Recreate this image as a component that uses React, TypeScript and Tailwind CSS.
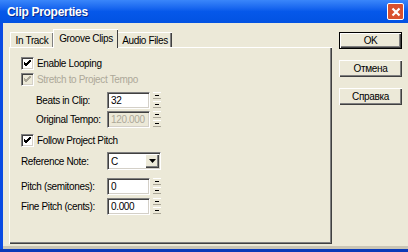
import { FC, ReactNode } from 'react';

const font = { fontFamily: '"Liberation Sans", Arial, sans-serif' };

const Spinner: FC = () => (
    <svg width="8" height="17" viewBox="0 0 8 17" className="ml-[3px] shrink-0">
        <rect x="0" y="0" width="8" height="1" fill="#FFFFFF" />
        <rect x="2" y="3" width="4" height="1" fill="#000000" />
        <rect x="0" y="6" width="8" height="1" fill="#ACA899" />
        <rect x="0" y="9" width="8" height="1" fill="#FFFFFF" />
        <rect x="2" y="12" width="4" height="1" fill="#000000" />
        <rect x="0" y="15" width="8" height="1" fill="#ACA899" />
    </svg>
);

const Check: FC<{ disabled?: boolean }> = ({ disabled }) => (
    <div
        className={`flex h-[13px] w-[13px] shrink-0 items-center justify-center border border-t-[#808080] border-l-[#808080] border-r-white border-b-white shadow-[inset_1px_1px_0_#404040,inset_-1px_-1px_0_#D4D0C8] ${
            disabled ? 'bg-[#ECE9D8]' : 'bg-white'
        }`}
    >
        <svg width="7" height="7" viewBox="0 0 7 7">
            <path d="M0 2 L2 4 L7 -1 M0 3 L2 5 L7 0 M0 4 L2 6 L7 1" stroke={disabled ? '#ACA899' : '#000'} strokeWidth="1" fill="none" />
        </svg>
    </div>
);

const CheckRow: FC<{ label: string; disabled?: boolean; className?: string }> = ({ label, disabled, className }) => (
    <div className={`flex h-[16px] items-center ${className ?? ''}`}>
        <Check disabled={disabled} />
        <span className={`ml-[3px] whitespace-nowrap ${disabled ? 'text-[#ACA899]' : 'text-black'}`}>{label}</span>
    </div>
);

const Field: FC<{ value: string; disabled?: boolean }> = ({ value, disabled }) => (
    <div
        className={`flex h-[17px] w-[43px] shrink-0 items-center overflow-hidden border border-t-[#808080] border-l-[#808080] border-r-white border-b-white pl-[3px] shadow-[inset_1px_1px_0_#404040,inset_-1px_-1px_0_#D4D0C8] ${
            disabled ? 'bg-[#ECE9D8] text-[#ACA899]' : 'bg-white text-black'
        }`}
    >
        {value}
    </div>
);

const Row: FC<{ label: string; indent?: boolean; className?: string; children: ReactNode }> = ({ label, indent, className, children }) => (
    <div className={`flex items-center ${className ?? ''}`}>
        <span className={`w-[86px] shrink-0 whitespace-nowrap ${indent ? 'pl-[15px]' : ''}`}>{label}</span>
        {children}
    </div>
);

const Button: FC<{ label: string; def?: boolean }> = ({ label, def }) => (
    <div
        className={`flex h-[17px] w-[63px] items-center justify-center bg-[#ECE9D8] shadow-[inset_1px_1px_0_white,inset_-1px_-1px_0_#404040,inset_-2px_-2px_0_#808080] ${
            def ? 'border border-black' : ''
        }`}
    >
        {label}
    </div>
);

const App: FC = () => {
    return (
        <div className="flex h-[252px] w-[408px] flex-col overflow-hidden bg-[#ECE9D8] text-[10px] tracking-[-0.35px] text-black" style={font}>
            <div className="flex h-[23px] shrink-0 items-center justify-between bg-gradient-to-b from-[#3A86FA] via-[#0658EA] to-[#0252E2] pl-[7px] pr-[4px]">
                <span className="text-[12px] font-bold tracking-[-0.3px] text-white [text-shadow:1px_1px_0_#0A2A8A]">Clip Properties</span>
                <div className="flex h-[17px] w-[17px] items-center justify-center rounded-[2px] border border-white bg-[#D9502E]">
                    <svg width="10" height="10" viewBox="0 0 10 10">
                        <path d="M1.5 1.5 L8.5 8.5 M8.5 1.5 L1.5 8.5" stroke="white" strokeWidth="2.2" />
                    </svg>
                </div>
            </div>

            <div className="flex flex-1 border-l-[3px] border-[#0A4BE3]">
                <div className="flex flex-1 flex-col">
                    <div className="flex flex-1 pl-[6px] pt-[6px]">
                        <div className="flex w-[323px] flex-col">
                            <div className="flex h-[18px] items-end">
                                <div className="ml-[1px] flex h-[15px] w-[43px] items-center justify-center border-l border-t border-white shadow-[inset_-1px_0_0_#808080]">
                                    In Track
                                </div>
                                <div className="relative z-10 -mb-[1px] flex h-[19px] w-[65px] items-center justify-center border-l border-t border-white bg-[#ECE9D8] pb-[1px] shadow-[inset_-1px_0_0_#404040]">
                                    Groove Clips
                                </div>
                                <div className="flex h-[15px] w-[54px] items-center justify-center border-t border-white shadow-[inset_-1px_0_0_#404040,inset_-2px_0_0_#808080]">
                                    Audio Files
                                </div>
                            </div>
                            <div className="flex h-[197px] flex-col border-l border-t border-white pl-[11px] pt-[7px] shadow-[inset_-1px_-1px_0_#404040,inset_-2px_-2px_0_#808080]">
                                <CheckRow label="Enable Looping" />
                                <CheckRow label="Stretch to Project Tempo" disabled />
                                <Row label="Beats in Clip:" indent className="mt-[5px]">
                                    <Field value="32" />
                                    <Spinner />
                                </Row>
                                <Row label="Original Tempo:" indent className="mt-[2px]">
                                    <Field value="120.000" disabled />
                                    <Spinner />
                                </Row>
                                <CheckRow label="Follow Project Pitch" className="mt-[4px]" />
                                <Row label="Reference Note:" className="mt-[4px]">
                                    <div className="flex h-[18px] w-[54px] items-center border border-t-[#808080] border-l-[#808080] border-r-white border-b-white bg-white shadow-[inset_1px_1px_0_#404040,inset_-1px_-1px_0_#D4D0C8]">
                                        <span className="flex-1 pl-[3px]">C</span>
                                        <div className="mr-[1px] flex h-[14px] w-[14px] items-center justify-center bg-[#ECE9D8] shadow-[inset_1px_1px_0_white,inset_-1px_-1px_0_#404040,inset_-2px_-2px_0_#808080]">
                                            <svg width="7" height="4" viewBox="0 0 7 4">
                                                <path d="M0 0 H7 L3.5 4 Z" fill="#000" />
                                            </svg>
                                        </div>
                                    </div>
                                </Row>
                                <Row label="Pitch (semitones):" className="mt-[8px]">
                                    <Field value="0" />
                                    <Spinner />
                                </Row>
                                <Row label="Fine Pitch (cents):" className="mt-[3px]">
                                    <Field value="0.000" />
                                    <Spinner />
                                </Row>
                            </div>
                        </div>
                        <div className="ml-[7px] flex flex-col gap-[11px] pt-[3px]">
                            <Button label="OK" def />
                            <Button label="Отмена" />
                            <Button label="Справка" />
                        </div>
                    </div>
                    <div className="h-[2px] shrink-0" />
                    <div className="h-[3px] shrink-0 bg-[#C9C5B5]" />
                </div>
            </div>
            <div className="h-[3px] shrink-0 bg-[#0A3AB8]" />
        </div>
    );
};

export default App;
